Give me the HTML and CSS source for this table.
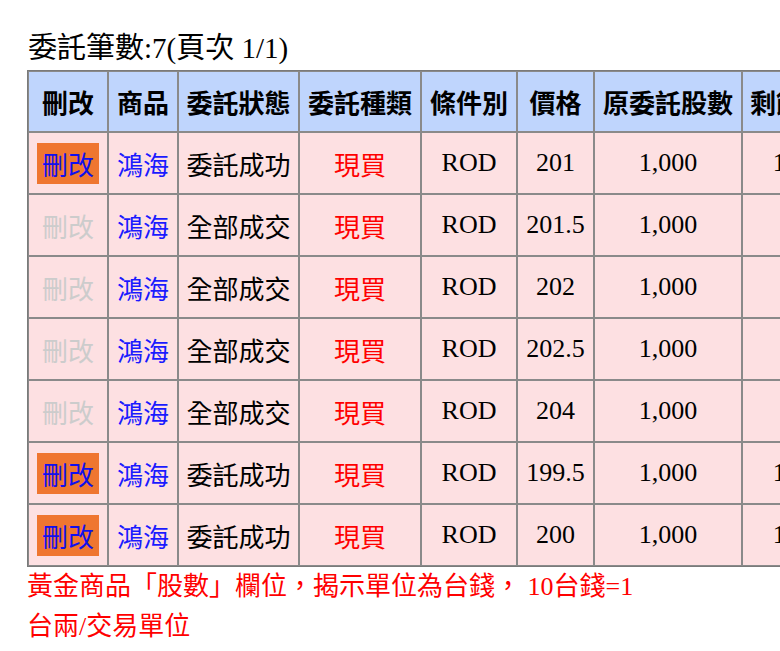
FILE: index.html
```html
<!DOCTYPE html>
<html lang="zh-Hant">
<head>
<meta charset="utf-8">
<link rel="stylesheet" href="styles.css">
</head>
<body>
<div class="page">
  <div class="title">委託筆數:7(頁次 1/1)</div>
  <table class="orders">
    <colgroup>
      <col class="c1"><col class="c2"><col class="c3"><col class="c4"><col class="c5"><col class="c6"><col class="c7"><col class="c8">
    </colgroup>
    <thead>
      <tr><th>刪改</th><th>商品</th><th>委託狀態</th><th>委託種類</th><th>條件別</th><th>價格</th><th>原委託股數</th><th>剩餘股數</th></tr>
    </thead>
    <tbody>
      <tr><td><span class="btn">刪改</span></td><td class="prod">鴻海</td><td>委託成功</td><td class="buy">現買</td><td>ROD</td><td>201</td><td>1,000</td><td>1,000</td></tr>
      <tr><td><span class="btn off">刪改</span></td><td class="prod">鴻海</td><td>全部成交</td><td class="buy">現買</td><td>ROD</td><td>201.5</td><td>1,000</td><td>0</td></tr>
      <tr><td><span class="btn off">刪改</span></td><td class="prod">鴻海</td><td>全部成交</td><td class="buy">現買</td><td>ROD</td><td>202</td><td>1,000</td><td>0</td></tr>
      <tr><td><span class="btn off">刪改</span></td><td class="prod">鴻海</td><td>全部成交</td><td class="buy">現買</td><td>ROD</td><td>202.5</td><td>1,000</td><td>0</td></tr>
      <tr><td><span class="btn off">刪改</span></td><td class="prod">鴻海</td><td>全部成交</td><td class="buy">現買</td><td>ROD</td><td>204</td><td>1,000</td><td>0</td></tr>
      <tr><td><span class="btn">刪改</span></td><td class="prod">鴻海</td><td>委託成功</td><td class="buy">現買</td><td>ROD</td><td>199.5</td><td>1,000</td><td>1,000</td></tr>
      <tr><td><span class="btn">刪改</span></td><td class="prod">鴻海</td><td>委託成功</td><td class="buy">現買</td><td>ROD</td><td>200</td><td>1,000</td><td>1,000</td></tr>
    </tbody>
  </table>
  <div class="note">黃金商品「股數」欄位，揭示單位為台錢， 10台錢=1台兩/交易單位</div>
</div>
</body>
</html>
```

FILE: styles.css
```css
html, body {
  margin: 0;
  padding: 0;
  background: #ffffff;
  overflow: hidden;
}
body {
  font-family: "Liberation Serif", "Noto Sans CJK TC", serif;
  font-size: 26px;
  color: #000000;
}
.page {
  padding: 28px 0 0 27px;
  width: 900px;
}
.title {
  font-size: 29px;
  line-height: 40px;
  height: 42px;
  padding-left: 1px;
}
.orders {
  table-layout: fixed;
  border-collapse: separate;
  border-spacing: 0;
  border: 1px solid #7a7a7a;
  width: 836px;
}
.c1 { width: 80px; }
.c2 { width: 70px; }
.c3 { width: 121px; }
.c4 { width: 122px; }
.c5 { width: 96px; }
.c6 { width: 77px; }
.c7 { width: 148px; }
.c8 { width: 120px; }
.orders th,
.orders td {
  border: 1px solid #8a8a8a;
  padding: 0;
  text-align: center;
  white-space: nowrap;
  overflow: hidden;
}
.orders tr {
  height: 62px;
}
.orders thead tr {
  height: 61px;
}
.orders th {
  background: #bfd5fd;
  font-weight: bold;
  font-family: "Noto Sans CJK TC", sans-serif;
}
.orders td {
  background: #fde0e2;
}
.btn {
  display: inline-block;
  background: #ef7630;
  color: #1010ee;
  padding: 3px 5px;
  line-height: 35px;
  font-family: "Noto Sans CJK TC", sans-serif;
}
.btn.off {
  background: transparent;
  color: #cccccc;
}
.prod {
  color: #1a1aff;
}
.buy {
  color: #ff0000;
}
.note {
  width: 625px;
  color: #ff0000;
  line-height: 40px;
}
```
